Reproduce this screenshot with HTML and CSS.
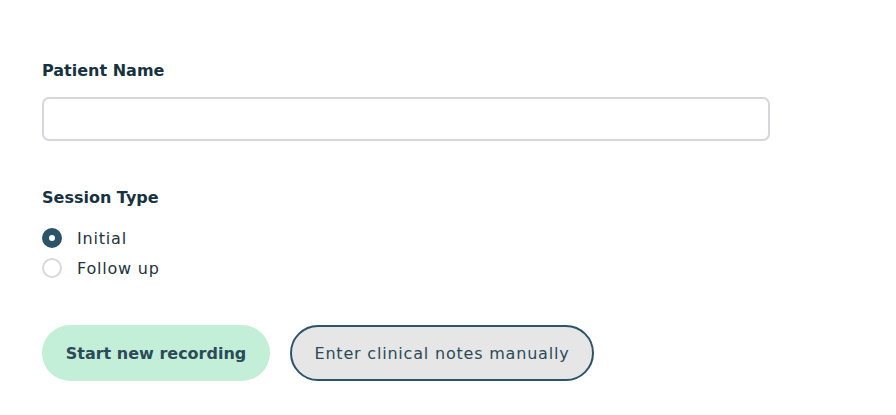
FILE: index.html
```html
<!DOCTYPE html>
<html lang="en">
<head>
  <meta charset="UTF-8">
  <title>New Session</title>
  <link rel="stylesheet" href="styles.css">
</head>
<body>
  <form class="session-form">
    <div class="field">
      <label class="field-label" for="patient">Patient Name</label>
      <input type="text" id="patient" class="text-input">
    </div>

    <div class="field session-type">
      <div class="field-label">Session Type</div>
      <label class="radio-row">
        <input type="radio" name="type" value="initial" checked>
        <span class="radio-mark"></span>
        <span class="radio-text">Initial</span>
      </label>
      <label class="radio-row">
        <input type="radio" name="type" value="followup">
        <span class="radio-mark"></span>
        <span class="radio-text">Follow up</span>
      </label>
    </div>

    <div class="actions">
      <button type="button" class="btn btn-primary">Start new recording</button>
      <button type="button" class="btn btn-outline">Enter clinical notes manually</button>
    </div>
  </form>
</body>
</html>
```

FILE: styles.css
```css
* {
  box-sizing: border-box;
}

body {
  margin: 0;
  padding: 0;
  background: #fff;
  font-family: 'DejaVu Sans', sans-serif;
  color: #1e3a47;
}

.session-form {
  padding: 59px 0 0 42px;
}

.field {
  display: flex;
  flex-direction: column;
}

.field-label {
  font-size: 16px;
  line-height: 24px;
  font-weight: 700;
  color: #17323f;
  margin-bottom: 14px;
}

.text-input {
  width: 728px;
  height: 44px;
  border: 2px solid #d6d6de;
  border-radius: 7px;
  padding: 0 12px;
  font-size: 16px;
  font-family: inherit;
}

.text-input:focus {
  outline: none;
  border-color: #2c5468;
}

.session-type {
  margin-top: 45px;
}

.session-type .field-label {
  margin-bottom: 13px;
}

.radio-row {
  display: flex;
  align-items: center;
  height: 30px;
  cursor: pointer;
}

.radio-row input {
  display: none;
}

.radio-mark {
  width: 20px;
  height: 20px;
  border-radius: 50%;
  border: 2px solid #d8d8dc;
  position: relative;
}

.radio-row input:checked + .radio-mark {
  background: #2c5468;
  border-color: #2c5468;
}

.radio-row input:checked + .radio-mark::after {
  content: "";
  position: absolute;
  left: 5px;
  top: 5px;
  width: 6px;
  height: 6px;
  border-radius: 50%;
  background: #fff;
}

.radio-text {
  margin-left: 15px;
  font-size: 16px;
  letter-spacing: 0.8px;
  color: #22333d;
}

.actions {
  display: flex;
  gap: 20px;
  margin-top: 42px;
}

.btn {
  height: 56px;
  border-radius: 28px;
  font-family: inherit;
  font-size: 16px;
  cursor: pointer;
}

.btn-primary {
  width: 228px;
  background: #c3efd9;
  border: none;
  font-weight: 700;
  color: #2c4a58;
}

.btn-outline {
  width: 304px;
  background: #e6e6e6;
  border: 2px solid #2c5468;
  color: #2c4a58;
  letter-spacing: 0.8px;
}
```
